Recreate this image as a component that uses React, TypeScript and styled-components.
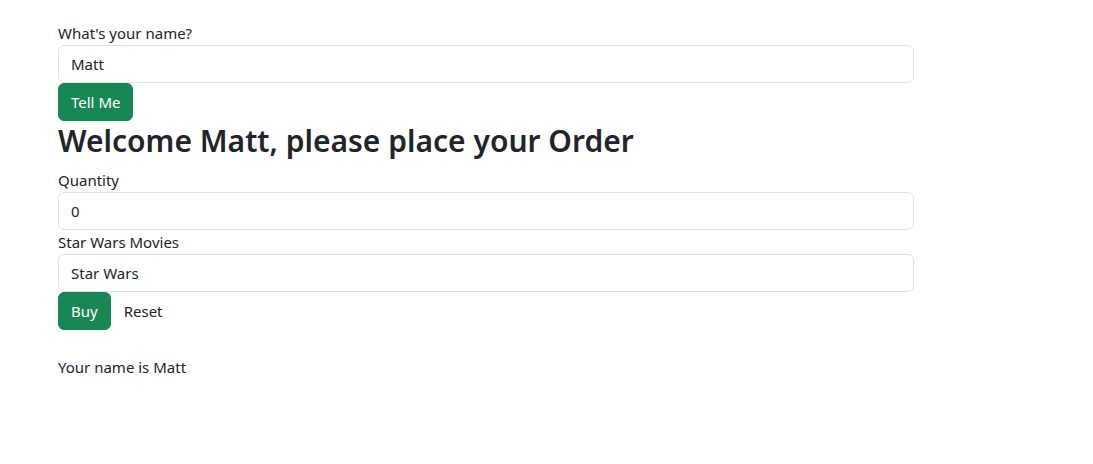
import React, { useState } from "react";
import styled, { createGlobalStyle } from "styled-components";

const Global = createGlobalStyle`
  html, body { margin: 0; padding: 0; background: #fff; }
  body {
    font-family: "Segoe UI", "Noto Sans", "Liberation Sans", sans-serif;
    font-size: 15px;
    line-height: 24px;
    color: #212529;
  }
  * { box-sizing: border-box; }
`;

const Page = styled.div`
  width: 856px;
  margin-left: 58px;
  padding-top: 21px;
`;

const Label = styled.label`
  display: block;
  font-size: 15px;
  line-height: 24px;
`;

const Input = styled.input`
  display: block;
  width: 100%;
  height: 38px;
  padding: 6px 12px;
  font: inherit;
  color: #212529;
  background: #fff;
  border: 1px solid #dee2e6;
  border-radius: 6px;
  outline: none;
`;

const Button = styled.button<{ $variant?: "success" | "plain" }>`
  display: inline-block;
  height: 38px;
  padding: 6px 12px;
  font: inherit;
  line-height: 24px;
  border-radius: 6px;
  border: 1px solid ${(p) => (p.$variant === "plain" ? "transparent" : "#198754")};
  background: ${(p) => (p.$variant === "plain" ? "transparent" : "#198754")};
  color: ${(p) => (p.$variant === "plain" ? "#212529" : "#fff")};
  cursor: pointer;
`;

const Row = styled.div`
  display: flex;
`;

const Heading = styled.h2`
  margin: 0 0 8px;
  font-size: 30px;
  font-weight: 600;
  line-height: 39px;
`;

const Note = styled.p`
  margin: 25px 0 0;
`;

export default function App() {
  const [name, setName] = useState("Matt");
  const [qty, setQty] = useState("0");
  const [movie, setMovie] = useState("Star Wars");
  return (
    <>
      <Global />
      <Page>
        <Label htmlFor="name">What's your name?</Label>
        <Input id="name" value={name} onChange={(e) => setName(e.target.value)} />
        <Row>
          <Button $variant="success">Tell Me</Button>
        </Row>
        <Heading>Welcome Matt, please place your Order</Heading>
        <Label htmlFor="qty">Quantity</Label>
        <Input id="qty" value={qty} onChange={(e) => setQty(e.target.value)} />
        <Label htmlFor="movie">Star Wars Movies</Label>
        <Input id="movie" value={movie} onChange={(e) => setMovie(e.target.value)} />
        <Row>
          <Button $variant="success">Buy</Button>
          <Button $variant="plain">Reset</Button>
        </Row>
        <Note>Your name is Matt</Note>
      </Page>
    </>
  );
}
